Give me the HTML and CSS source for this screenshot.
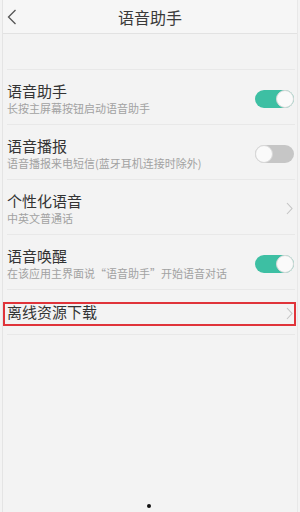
FILE: index.html
```html
<!DOCTYPE html>
<html lang="zh">
<head>
<meta charset="utf-8">
<link rel="stylesheet" href="styles.css">
</head>
<body>
<div class="screen">
  <header class="topbar">
    <svg class="back" width="10" height="16" viewBox="0 0 10 16"><path d="M8.5 1 L1.5 8 L8.5 15" fill="none" stroke="#555" stroke-width="1.3"/></svg>
    <div class="title">语音助手</div>
  </header>
  <div class="gap"></div>
  <div class="list">
    <div class="row">
      <div class="text"><div class="t">语音助手</div><div class="s">长按主屏幕按钮启动语音助手</div></div>
      <div class="switch on"><span class="knob"></span></div>
    </div>
    <div class="row">
      <div class="text"><div class="t">语音播报</div><div class="s">语音播报来电短信(蓝牙耳机连接时除外)</div></div>
      <div class="switch off"><span class="knob"></span></div>
    </div>
    <div class="row">
      <div class="text"><div class="t">个性化语音</div><div class="s">中英文普通话</div></div>
      <svg class="chev" width="7" height="13" viewBox="0 0 7 13"><path d="M1 1 L6 6.5 L1 12" fill="none" stroke="#c4c4c4" stroke-width="1.1"/></svg>
    </div>
    <div class="row">
      <div class="text"><div class="t">语音唤醒</div><div class="s">在该应用主界面说“语音助手”开始语音对话</div></div>
      <div class="switch on"><span class="knob"></span></div>
    </div>
    <div class="row single">
      <div class="text"><div class="t">离线资源下载</div></div>
      <svg class="chev" width="7" height="13" viewBox="0 0 7 13"><path d="M1 1 L6 6.5 L1 12" fill="none" stroke="#c4c4c4" stroke-width="1.1"/></svg>
      <div class="mark"></div>
    </div>
  </div>
  <div class="spacer"></div>
  <div class="dot"></div>
</div>
</body>
</html>
```

FILE: styles.css
```css
* { box-sizing: border-box; }
html, body { margin: 0; padding: 0; }
body {
  width: 300px;
  height: 512px;
  background: #f3f3f3;
  font-family: "Noto Sans CJK SC", "Noto Sans", sans-serif;
  color: #333;
  overflow: hidden;
}
.screen {
  height: 512px;
  display: flex;
  flex-direction: column;
  border-left: 1px solid #e4e4e4;
  border-right: 1px solid #e8e8e8;
  margin: 0 2px;
}
.topbar {
  position: relative;
  height: 34px;
  background: #f6f6f6;
  border-bottom: 1px solid #e2e2e2;
  display: flex;
  align-items: center;
  justify-content: center;
}
.back {
  position: absolute;
  left: 4px;
  top: 9px;
}
.title {
  font-size: 16px;
  color: #3a3a3a;
  line-height: 20px;
}
.gap { height: 35px; }
.list {
  border-top: 1px solid #e8e8e8;
  margin: 0 2px 0 4px;
}
.row {
  position: relative;
  height: 55px;
  display: flex;
  align-items: center;
  border-bottom: 1px solid #e8e8e8;
  padding: 0 1px 0 0;
}
.row .text {
  flex: 1;
  padding-top: 3px;
}
.row.single { height: 45px; }
.row.single .text { padding-top: 0; }
.t {
  font-size: 15px;
  line-height: 18px;
  color: #333;
}
.s {
  font-size: 11px;
  line-height: 14px;
  color: #a2a2a2;
  margin-top: 1px;
  white-space: nowrap;
}
.switch {
  width: 39px;
  height: 18px;
  border-radius: 9px;
  position: relative;
  margin-top: 3px;
}
.switch.on { background: #3dbfa3; }
.switch.off { background: #c6c6c6; }
.knob {
  position: absolute;
  top: 0;
  width: 18px;
  height: 18px;
  border-radius: 50%;
  background: #fafafa;
  border: 1px solid #d8d8d8;
}
.switch.on .knob { right: 0; }
.switch.off .knob { left: 0; }
.chev { margin-right: 1px; margin-top: 2px; }
.mark {
  position: absolute;
  left: -4px;
  right: -1px;
  top: 12px;
  height: 24px;
  border: 2px solid #e0343a;
}
.spacer { flex: 1; }
.dot {
  width: 4px;
  height: 4px;
  border-radius: 50%;
  background: #111;
  align-self: center;
  margin-bottom: 4px;
  margin-left: -2px;
}
```
